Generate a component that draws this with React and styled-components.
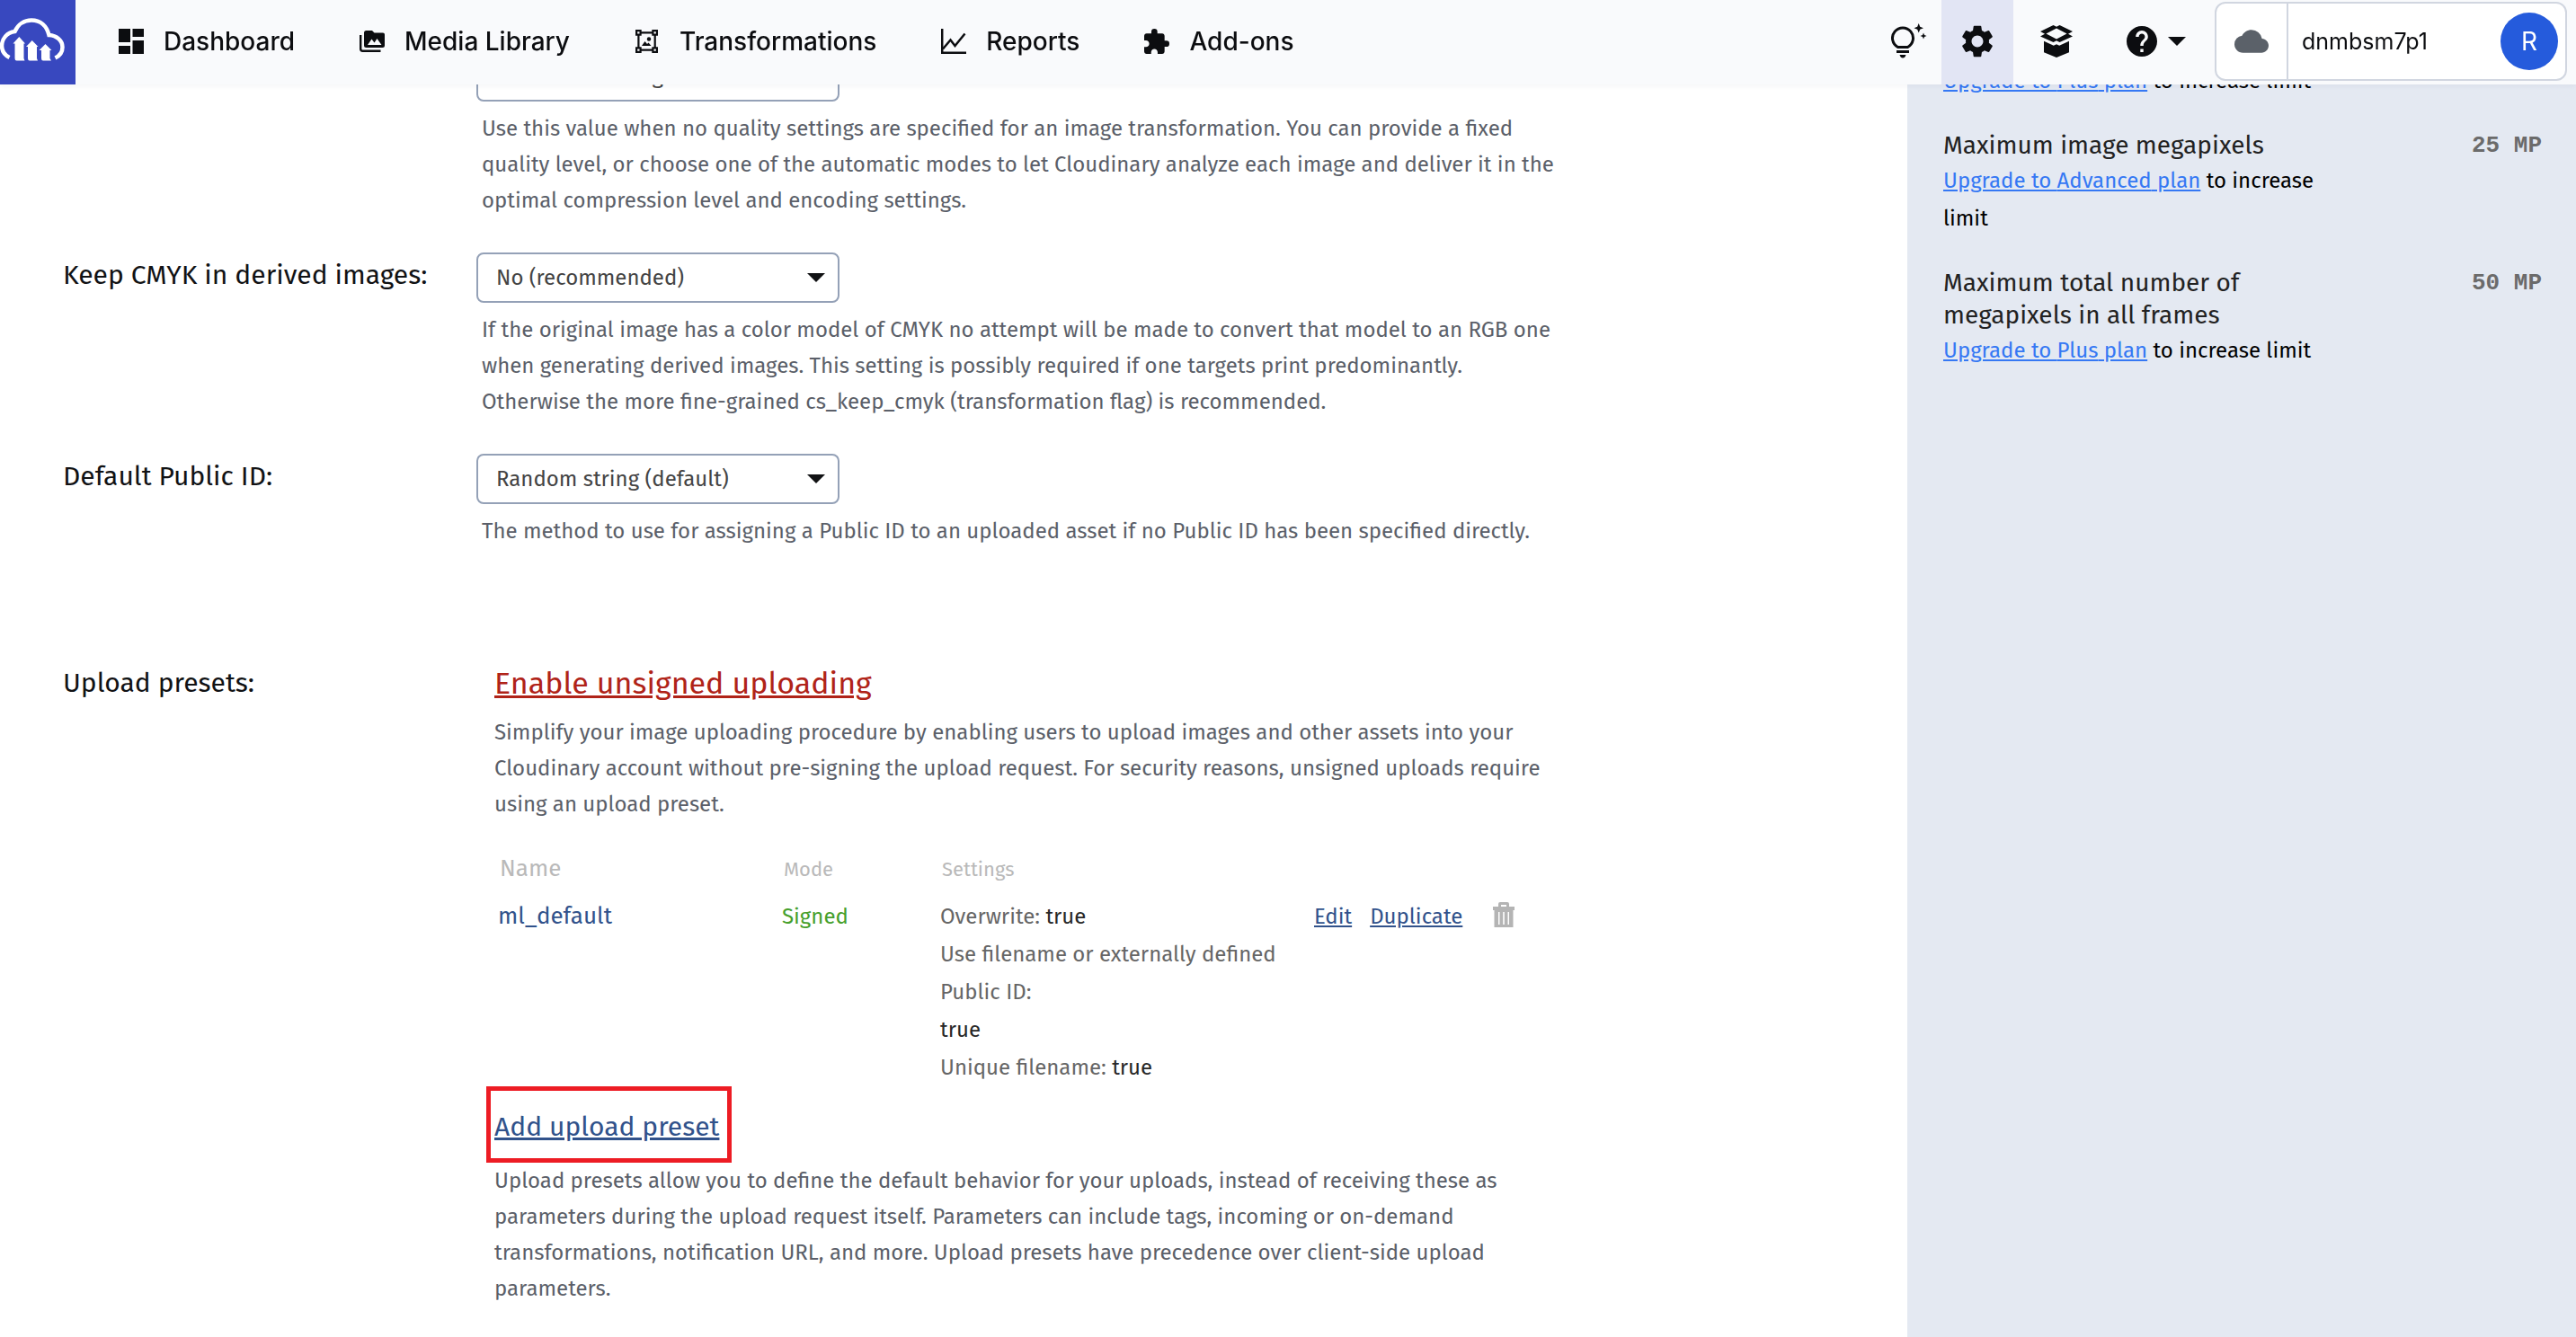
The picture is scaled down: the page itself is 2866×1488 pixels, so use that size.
import React from 'react';

import styled, { createGlobalStyle } from 'styled-components';

// icons
import { MdCloud, MdExtension, MdHelp, MdSettings } from 'react-icons/md';

const GlobalStyle = createGlobalStyle`
  *, *::before, *::after {
    box-sizing: border-box;
  }

  body {
    margin: 0;
    background: #fff;
    color: #111214;
    font-family: 'Fira Sans', 'Noto Sans', sans-serif;
    font-size: 24px;
  }

  button {
    padding: 0;
    border: 0;
    background: none;
    color: inherit;
    font: inherit;
    cursor: pointer;
  }
`;

// Header
const Header = styled.header`
  position: fixed;
  top: 0;
  left: 0;
  right: 0;
  z-index: 10;
  display: flex;
  height: 94px;
  background: #f9fafc;
  box-shadow: 0 2px 6px rgba(30, 40, 70, 0.05);
  color: #0c0d10;
  font-family: Inter, sans-serif;
`;

const LogoLink = styled.a`
  flex: none;
  width: 84px;
  background: #3848bf;
`;

const Nav = styled.nav`
  display: flex;
  flex: 1;
  align-items: center;
  gap: 72px;
  padding: 0 48px 2px;
`;

const NavLink = styled.a`
  display: flex;
  align-items: center;
  gap: 22px;
  color: inherit;
  font-size: 28px;
  font-weight: 500;
  line-height: 34px;
  text-decoration: none;
  white-space: nowrap;
`;

const Tools = styled.div`
  display: flex;
  align-items: center;
  padding-right: 10px;
`;

const ToolButton = styled.button`
  display: flex;
  align-items: center;
  justify-content: center;
  gap: 12px;
  width: ${(p) => p.$width}px;
  height: 94px;
  padding-bottom: 2px;
  background: ${(p) => (p.$active ? '#e2e5f4' : 'none')};
`;

const Account = styled.div`
  display: flex;
  align-items: center;
  width: 392px;
  height: 88px;
  margin: 0 0 2px 2px;
  padding-right: 8px;
  border: 2px solid #d1d6e0;
  border-radius: 12px;
  background: #fff;
`;

const CloudCell = styled.span`
  display: flex;
  align-items: center;
  justify-content: center;
  align-self: stretch;
  width: 80px;
  border-right: 2px solid #d1d6e0;
  color: #5b6169;
`;

const CloudName = styled.span`
  flex: 1;
  padding-left: 15px;
  font-size: 25px;
`;

const Avatar = styled.button`
  width: 64px;
  height: 64px;
  border-radius: 50%;
  background: #255bdc;
  color: #fff;
  font-size: 28px;
`;

// Page body
const Page = styled.div`
  display: flex;
  min-height: 100vh;
`;

const Main = styled.main`
  flex: 1;
  padding: 57px 40px 32px 70px;
`;

const SettingRow = styled.section`
  display: grid;
  grid-template-columns: 460px minmax(0, 1fr);
  align-items: start;
  margin-bottom: ${(p) => (p.$last ? 128 : 38)}px;
`;

const SettingLabel = styled.label`
  grid-column: 1;
  padding-top: 4px;
  font-size: 30px;
  line-height: 42px;
`;

const SettingTitle = styled.h2`
  margin: 0;
  font-size: 30px;
  font-weight: 400;
  line-height: 42px;
`;

const SettingField = styled.div`
  grid-column: 2;
`;

const SelectBox = styled.div`
  display: grid;
  align-items: center;
  width: 404px;

  > * {
    grid-area: 1 / 1;
  }

  > svg {
    justify-self: end;
    margin-right: 16px;
    pointer-events: none;
  }
`;

const Select = styled.select`
  appearance: none;
  width: 100%;
  height: 56px;
  padding: 0 48px 0 20px;
  border: 2px solid #94a1b7;
  border-radius: 8px;
  background: #fff;
  color: #444;
  font: inherit;
`;

const Text = styled.p`
  max-width: 1196px;
  margin: 0;
  color: #5b5f69;
  line-height: 40px;
`;

const HelpText = styled(Text)`
  margin: 10px 0 0 6px;
`;

const Presets = styled.div`
  padding-left: 20px;
`;

const EnableLink = styled.a`
  display: inline-block;
  margin-bottom: 12px;
  color: #b02318;
  font-size: 34px;
  line-height: 44px;
`;

const PresetTable = styled.table`
  width: 1196px;
  margin-top: 32px;
  border-spacing: 0;
  table-layout: fixed;
`;

const HeadCell = styled.th`
  width: ${(p) => p.$width}px;
  padding: 0 0 0 6px;
  color: #b9b9b9;
  font-size: ${(p) => (p.$large ? 26 : 22)}px;
  font-weight: 400;
  line-height: 40px;
  text-align: left;
  vertical-align: baseline;
`;

const Cell = styled.td`
  padding: 11px 0 0 4px;
  color: #666;
  line-height: 42px;
  vertical-align: top;
`;

const PresetName = styled.a`
  color: #31528b;
  font-size: 26px;
  text-decoration: none;
`;

const Signed = styled.span`
  color: #46a02c;
`;

const Value = styled.span`
  color: #282828;
`;

const Actions = styled.div`
  display: flex;
  gap: 20px;
`;

const ActionLink = styled.a`
  color: #31528b;
`;

const TrashButton = styled.button`
  display: flex;
  align-items: center;
  height: 38px;
  margin-left: 14px;
  color: #b4b4b4;
`;

const Highlight = styled.div`
  width: fit-content;
  margin-left: -9px;
  padding: 20px 9px 15px 4px;
  border: 5px solid #ed1c24;
  line-height: 40px;
`;

const AddLink = styled.a`
  display: block;
  color: #31528b;
  font-size: 30px;
`;

// Plan limits
const Sidebar = styled.aside`
  flex: 0 0 744px;
  padding: 69px 38px 33px 40px;
  background: #e4e9f2;
`;

const Limits = styled.ul`
  display: flex;
  flex-direction: column;
  gap: 33px;
  margin: 0;
  padding: 0;
  list-style: none;
`;

const Limit = styled.li`
  display: flex;
  justify-content: space-between;
`;

const LimitBody = styled.div`
  max-width: 440px;
`;

const LimitTitle = styled.h3`
  margin: 0;
  color: #222;
  font-size: 28px;
  font-weight: 400;
  line-height: 36px;
`;

const Upgrade = styled.p`
  margin: 0;
  color: #000;
  line-height: 42px;

  a {
    color: #3578f4;
  }
`;

const Amount = styled.span`
  color: #6b6b6b;
  font-family: Courier, 'Liberation Mono', monospace;
  font-size: 26px;
  font-weight: 700;
  line-height: 36px;
`;

const Logo = () => (
  <svg width="84" height="94" viewBox="0 0 84 94" fill="none">
    <path
      d="M10.5 64C4.5 61 2 56 2 51C2 43 8 36 16.5 35C20 27 27 22.5 35 22.5C45 22.5 52 29 54.5 39C63 39.5 69.5 45 69.5 52.5C69.5 58 66.5 62 61.5 64.5"
      stroke="#fff"
      strokeWidth="4.5"
    />
    <path
      d="M21.3 41L28 48.5H26.5V65L27.5 67.5H18.5Q16.5 67.5 16.5 65V48.5H14.5Z
        M35.7 45L42.5 52H41V65L42 67.5H33Q31 67.5 31 65V52H29Z
        M50.5 49L57.5 56H55.5V65L57 67.5H48Q46 67.5 46 65V56H43.5Z"
      fill="#fff"
    />
  </svg>
);

const DashboardIcon = () => (
  <svg width="28" height="28" viewBox="0 0 28 28" fill="currentColor">
    <path d="M0 0H13V15H0ZM15.5 0H28V9H15.5ZM0 19H13V28H0ZM15.5 13H28V28H15.5Z" />
  </svg>
);

const MediaIcon = () => (
  <svg width="28" height="28" viewBox="0 0 28 28" fill="none">
    <path d="M1.2 7V22.5Q1.2 24.7 3.5 24.7H23.5" stroke="currentColor" strokeWidth="2.4" />
    <path d="M7.5 2H14L16.5 4.5H26Q28 4.5 28 6.5V18.5Q28 21 25.5 21H7.500Q5 21 5 18.5V4.5Q5 2 7.5 2Z" fill="currentColor" />
    <path d="M9 18L13.5 11.5L16.5 15.5L19.5 11L24.5 18Z" fill="#f9fafc" />
  </svg>
);

const TransformIcon = () => (
  <svg width="28" height="28" viewBox="0 0 28 28" fill="none" stroke="currentColor" strokeWidth="2.2">
    <path d="M2.1 2.1H6.6V6.6H2.1ZM20.4 2.1H24.9V6.6H20.4ZM2.1 21.4H6.6V25.9H2.1ZM20.4 21.4H24.9V25.9H20.4Z" />
    <path d="M6.6 4.4H20.4M6.6 23.6H20.4M4.4 6.6V21.4M22.7 6.6V21.4" />
    <path d="M8 19L11.5 14L14 17L15.5 15.5L18.5 19Z" fill="currentColor" stroke="none" />
    <circle cx="16" cy="11.5" r="2.2" fill="currentColor" stroke="none" />
  </svg>
);

const ReportsIcon = () => (
  <svg width="28" height="28" viewBox="0 0 28 28" fill="none" stroke="currentColor" strokeWidth="2.5">
    <path d="M1.2 0V26.7H28" />
    <path d="M2 22.5L10.5 12.5L15.5 19L26.5 5.5" />
  </svg>
);

const BulbIcon = () => (
  <svg width="40" height="40" viewBox="0 0 40 40">
    <path
      d="M7.5 26.5A11.5 11.5 0 1 1 18.5 26.5Z"
      fill="none"
      stroke="currentColor"
      strokeWidth="3"
      strokeLinejoin="round"
    />
    <path d="M6 30H20V33H6ZM9.5 35H16.5Q15.5 38.5 13 38.5T9.5 35Z" fill="currentColor" />
    <path d="M30.7 0L32.2 3.8L36 5.3L32.2 6.8L30.7 10.5L29.2 6.8L25.5 5.3L29.2 3.8Z" fill="currentColor" />
    <path d="M36 10.5L37 13L39.5 14L37 15L36 17.5L35 15L32.5 14L35 13Z" fill="currentColor" />
  </svg>
);

const BoxIcon = () => (
  <svg width="36" height="36" viewBox="0 0 36 36" fill="currentColor">
    <path
      d="M14.5 0L18 1.8L21.5 0L36 7L31 9.7L36 12.4L21.5 19L18 17.3L14.5 19L0 12.4L5 9.7L0 7ZM18 3.6L6.5 9.6L18 15.6L29.5 9.6Z"
      fillRule="evenodd"
    />
    <path d="M4 17.8L14.8 22.8L18 21.2L21.2 22.8L32 17.8V30.2L18 36L4 30.2Z" />
  </svg>
);

const CaretIcon = () => (
  <svg width="20" height="10" viewBox="0 0 20 10" fill="currentColor">
    <path d="M0 0H20L10 10Z" />
  </svg>
);

const TrashIcon = () => (
  <svg width="24" height="28" viewBox="0 0 24 28" fill="currentColor">
    <path
      d="M0 5H6V2Q6 0 8 0H16Q18 0 18 2V5H24V9H0ZM9 3V5H15V3ZM1.5 9H22.5V28H1.5ZM6 11V25H7.5V11ZM11.2 11V25H12.8V11ZM16.5 11V25H18V11Z"
    fillRule="evenodd"
    />
  </svg>
);

const navItems = [
  { name: 'Dashboard', icon: <DashboardIcon /> },
  { name: 'Media Library', icon: <MediaIcon /> },
  { name: 'Transformations', icon: <TransformIcon /> },
  { name: 'Reports', icon: <ReportsIcon /> },
  { name: 'Add-ons', icon: <MdExtension size={28} viewBox="2 1 21 21" /> },
];

const settings = [
  {
    id: 'default-quality',
    value: 'No default change',
    help: 'Use this value when no quality settings are specified for an image transformation. You can provide a fixed quality level, or choose one of the automatic modes to let Cloudinary analyze each image and deliver it in the optimal compression level and encoding settings.',
  },
  {
    id: 'keep-cmyk',
    label: 'Keep CMYK in derived images:',
    value: 'No (recommended)',
    help: 'If the original image has a color model of CMYK no attempt will be made to convert that model to an RGB one when generating derived images. This setting is possibly required if one targets print predominantly. Otherwise the more fine-grained cs_keep_cmyk (transformation flag) is recommended.',
  },
  {
    id: 'default-public-id',
    label: 'Default Public ID:',
    value: 'Random string (default)',
    help: 'The method to use for assigning a Public ID to an uploaded asset if no Public ID has been specified directly.',
  },
];

const limits = [
  { plan: 'Plus' },
  { title: 'Maximum image megapixels', plan: 'Advanced', amount: '25 MP' },
  { title: 'Maximum total number of megapixels in all frames', plan: 'Plus', amount: '50 MP' },
];

const AppHeader = () => (
  <Header>
    <LogoLink href="#" aria-label="Cloudinary">
      <Logo />
    </LogoLink>
    <Nav>
      {navItems.map((item) => (
        <NavLink href="#" key={item.name}>
          {item.icon}
          {item.name}
        </NavLink>
      ))}
    </Nav>
    <Tools>
      <ToolButton $width={72} aria-label="What's new">
        <BulbIcon />
      </ToolButton>
      <ToolButton $width={80} $active aria-label="Settings">
        <MdSettings size={36} viewBox="2 2 20 20" />
      </ToolButton>
      <ToolButton $width={96} aria-label="Products">
        <BoxIcon />
      </ToolButton>
      <ToolButton $width={126} aria-label="Help">
        <MdHelp size={34} viewBox="2 2 20 20" />
        <CaretIcon />
      </ToolButton>
      <Account>
        <CloudCell>
          <MdCloud size={38} />
        </CloudCell>
        <CloudName>dnmbsm7p1</CloudName>
        <Avatar>R</Avatar>
      </Account>
    </Tools>
  </Header>
);

const UploadPresets = () => (
  <SettingRow>
    <SettingTitle>Upload presets:</SettingTitle>
    <Presets>
      <EnableLink href="#">Enable unsigned uploading</EnableLink>
      <Text>
        Simplify your image uploading procedure by enabling users to upload images and other assets into your
        Cloudinary account without pre-signing the upload request. For security reasons, unsigned uploads require
        using an upload preset.
      </Text>
      <PresetTable>
        <thead>
          <tr>
            <HeadCell $width={316} $large>Name</HeadCell>
            <HeadCell $width={176}>Mode</HeadCell>
            <HeadCell $width={416}>Settings</HeadCell>
            <HeadCell aria-label="Actions" />
          </tr>
        </thead>
        <tbody>
          <tr>
            <Cell>
              <PresetName href="#">ml_default</PresetName>
            </Cell>
            <Cell>
              <Signed>Signed</Signed>
            </Cell>
            <Cell>
              <div>Overwrite: <Value>true</Value></div>
              <div>Use filename or externally defined Public ID:</div>
              <div><Value>true</Value></div>
              <div>Unique filename: <Value>true</Value></div>
            </Cell>
            <Cell>
              <Actions>
                <ActionLink href="#">Edit</ActionLink>
                <ActionLink href="#">Duplicate</ActionLink>
                <TrashButton aria-label="Delete ml_default">
                  <TrashIcon />
                </TrashButton>
              </Actions>
            </Cell>
          </tr>
        </tbody>
      </PresetTable>
      <Highlight>
        <AddLink href="#">Add upload preset</AddLink>
      </Highlight>
      <Text>
        Upload presets allow you to define the default behavior for your uploads, instead of receiving these as
        parameters during the upload request itself. Parameters can include tags, incoming or on-demand
        transformations, notification URL, and more. Upload presets have precedence over client-side upload
        parameters.
      </Text>
    </Presets>
  </SettingRow>
);

export default function App() {
  return (
    <>
      <GlobalStyle />
      <AppHeader />
      <Page>
        <Main>
          {settings.map((item, index) => (
            <SettingRow key={item.id} $last={index === settings.length - 1}>
              {item.label && <SettingLabel htmlFor={item.id}>{item.label}</SettingLabel>}
              <SettingField>
                <SelectBox>
                  <Select id={item.id} aria-label={item.label ? undefined : 'Default image quality'}>
                    <option>{item.value}</option>
                  </Select>
                  <CaretIcon />
                </SelectBox>
                <HelpText>{item.help}</HelpText>
              </SettingField>
            </SettingRow>
          ))}
          <UploadPresets />
        </Main>
        <Sidebar>
          <Limits>
            {limits.map((limit, index) => (
              <Limit key={index}>
                <LimitBody>
                  {limit.title && <LimitTitle>{limit.title}</LimitTitle>}
                  <Upgrade>
                    <a href="#">Upgrade to {limit.plan} plan</a> to increase limit
                  </Upgrade>
                </LimitBody>
                {limit.amount && <Amount>{limit.amount}</Amount>}
              </Limit>
            ))}
          </Limits>
        </Sidebar>
      </Page>
    </>
  );
}
